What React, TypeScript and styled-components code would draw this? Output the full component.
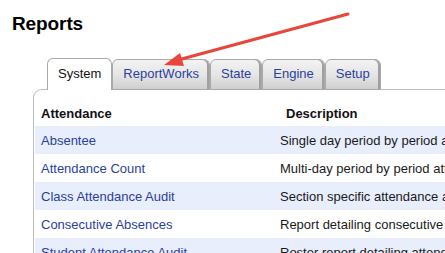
import { createGlobalStyle } from "styled-components";
import styled from "styled-components";

const GlobalStyle = createGlobalStyle`
  html, body {
    margin: 0;
    padding: 0;
    background: #ffffff;
    overflow: hidden;
  }
  body {
    font-family: "Liberation Sans", Arial, sans-serif;
    color: #111;
  }
`;

const tabs = ["System", "ReportWorks", "State", "Engine", "Setup"];

const rows = [
  { name: "Absentee", desc: "Single day period by period attendance" },
  { name: "Attendance Count", desc: "Multi-day period by period attendance" },
  { name: "Class Attendance Audit", desc: "Section specific attendance audit" },
  { name: "Consecutive Absences", desc: "Report detailing consecutive absences" },
  { name: "Student Attendance Audit", desc: "Roster report detailing attendance" },
];

const Page = styled.div`
  position: relative;
  width: 445px;
  height: 253px;
  overflow: hidden;
`;

const Title = styled.h1`
  margin: 0;
  padding: 13px 0 0 12px;
  height: 58px;
  box-sizing: border-box;
  font-size: 19px;
  font-weight: 700;
  color: #000;
  letter-spacing: -0.1px;
`;

const TabBar = styled.div`
  display: flex;
  align-items: flex-end;
  padding-left: 47px;
  height: 32px;
  position: relative;
  z-index: 2;
`;

const Tab = styled.div<{ $active?: boolean }>`
  height: ${(p) => (p.$active ? "32px" : "31px")};
  box-sizing: border-box;
  display: flex;
  align-items: center;
  justify-content: center;
  padding: 0 10px 2px;
  border: 1px solid #a9a9a9;
  border-bottom: ${(p) => (p.$active ? "none" : "1px solid #a9a9a9")};
  border-radius: 6px 6px 0 0;
  font-size: 13px;
  color: ${(p) => (p.$active ? "#111" : "#2b3f9e")};
  background: ${(p) =>
    p.$active
      ? "#ffffff"
      : "linear-gradient(to bottom, #f3f3f3 0%, #e4e4e4 55%, #cfcfcf 100%)"};
  box-shadow: ${(p) => (p.$active ? "none" : "inset -2px 0 0 #a0a0a0")};
`;

const Panel = styled.div`
  margin: -1px 0 0 33px;
  border-top: 1px solid #bdbdbd;
  border-left: 1px solid #bdbdbd;
  border-top-left-radius: 9px;
  padding: 0 0 0 1px;
  position: relative;
  z-index: 1;
`;

const Table = styled.table`
  border-collapse: collapse;
  width: 520px;
  font-size: 13px;
`;

const HeadRow = styled.tr`
  height: 36px;
`;

const Th = styled.th<{ $w?: number }>`
  text-align: left;
  font-weight: 700;
  color: #111;
  padding: 10px 0 0 6px;
  width: ${(p) => (p.$w ? `${p.$w}px` : "auto")};
`;

const Row = styled.tr<{ $odd: boolean }>`
  background: ${(p) => (p.$odd ? "#e8eefb" : "#ffffff")};
  height: 28px;
`;

const NameCell = styled.td`
  padding: 0 0 0 6px;
  color: #2b3f9e;
  white-space: nowrap;
`;

const DescCell = styled.td`
  padding: 0;
  color: #1a1a1a;
  white-space: nowrap;
`;

const Arrow = styled.svg`
  position: absolute;
  left: 0;
  top: 0;
  z-index: 5;
  pointer-events: none;
`;

export default function App() {
  return (
    <Page>
      <GlobalStyle />
      <Title>Reports</Title>
      <TabBar>
        {tabs.map((t, i) => (
          <Tab key={t} $active={i === 0}>
            {t}
          </Tab>
        ))}
      </TabBar>
      <Panel>
        <Table>
          <thead>
            <HeadRow>
              <Th $w={239}>Attendance</Th>
              <Th>Description</Th>
            </HeadRow>
          </thead>
          <tbody>
            {rows.map((r, i) => (
              <Row key={r.name} $odd={i % 2 === 0}>
                <NameCell>{r.name}</NameCell>
                <DescCell>{r.desc}</DescCell>
              </Row>
            ))}
          </tbody>
        </Table>
      </Panel>
      <Arrow width="445" height="253" viewBox="0 0 445 253">
        <line x1="348" y1="14" x2="178" y2="60" stroke="#e8463a" strokeWidth="3" strokeLinecap="round" />
        <polygon points="164,65 180,53 184,66" fill="#e8463a" />
      </Arrow>
    </Page>
  );
}
